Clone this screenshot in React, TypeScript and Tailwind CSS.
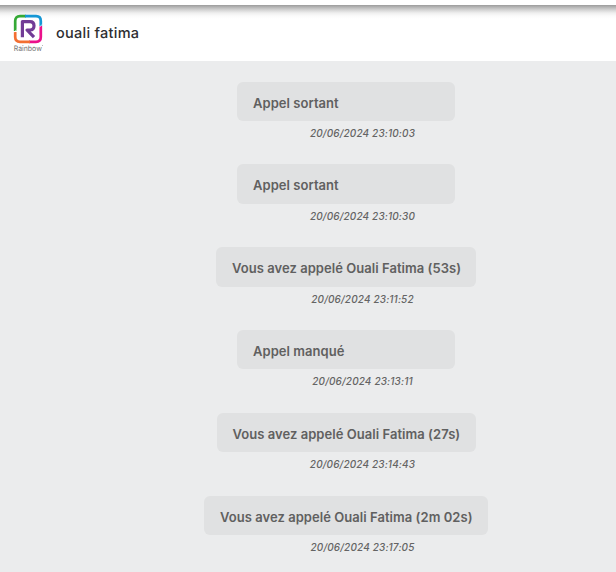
type Call = { label: string; date: string; box: string };

const calls: Call[] = [
  { label: "Appel sortant", date: "20/06/2024 23:10:03", box: "w-[218px]" },
  { label: "Appel sortant", date: "20/06/2024 23:10:30", box: "w-[218px]" },
  { label: "Vous avez appelé Ouali Fatima (53s)", date: "20/06/2024 23:11:52", box: "w-[260px]" },
  { label: "Appel manqué", date: "20/06/2024 23:13:11", box: "w-[218px]" },
  { label: "Vous avez appelé Ouali Fatima (27s)", date: "20/06/2024 23:14:43", box: "w-[259px]" },
  { label: "Vous avez appelé Ouali Fatima (2m 02s)", date: "20/06/2024 23:17:05", box: "w-[284px]" },
];

function RainbowLogo() {
  return (
    <svg width="32" height="40" viewBox="0 0 32 40" fill="none" className="shrink-0">
      <g strokeWidth="2.7">
        <path d="M2.2 17V7Q2.2 2.2 7 2.2H13" stroke="#35a936" />
        <path d="M12 2.2H23Q27.8 2.2 27.8 7V12" stroke="#1597d5" />
        <path d="M27.8 12V23Q27.8 27.8 23 27.8H16" stroke="#eb108b" />
        <path d="M17 27.8H7Q2.2 27.8 2.2 23V18" stroke="#f36f32" />
      </g>
      <path d="M1 18.4L3.8 15.6M26.2 13.4L29.2 10.4" stroke="white" strokeWidth="0.8" />
      <path d="M9.4 23.2V7.6H17Q21 7.6 21 11.8T17 16H14L21 23.2" stroke="#713c96" strokeWidth="3.2" strokeLinejoin="round" />
      <text x="0.8" y="36.6" fontFamily="Inter, sans-serif" fontSize="7.5" fill="#737373" textLength="28" lengthAdjust="spacingAndGlyphs" textRendering="geometricPrecision">Rainbow</text>
      <path d="M29.5 31V32" stroke="#999999" strokeWidth="0.7" />
    </svg>
  );
}

export default function App() {
  return (
    <div className="h-[572px] w-[616px] overflow-hidden bg-[#ebeced] font-['Inter',sans-serif]">
      <div className="h-[5px] bg-white" />
      <header className="flex h-14 items-start bg-white bg-[linear-gradient(to_bottom,#9b9b9b_0px,#b4b4b4_2px,#d4d4d4_5px,#efefef_8px,#fbfbfb_11px,#ffffff_14px)] pt-[9px] pl-[13px]">
        <RainbowLogo />
        <h1 className="mt-[9px] ml-[11px] text-[14.5px] leading-5 font-[550] tracking-[0.27px] text-[#2e2e31]">ouali fatima</h1>
      </header>
      <main className="flex flex-col items-center gap-[21.4px] pt-[20.6px] pl-[76px]">
        {calls.map((call) => (
          <div key={call.date} className="flex h-[61.4px] flex-col items-center">
            <div className={`${call.box} h-[39.4px] shrink-0 rounded-md bg-[#e0e1e2] pt-[11px] pl-4 text-[13px] leading-5 font-[570] tracking-[0.045px] whitespace-nowrap text-[#606060]`}>
              {call.label}
            </div>
            <time className="mt-[4.1px] ml-[33px] text-[10px] leading-4 font-medium tracking-[0.14px] whitespace-nowrap text-[#646464] italic">{call.date}</time>
          </div>
        ))}
      </main>
    </div>
  );
}
